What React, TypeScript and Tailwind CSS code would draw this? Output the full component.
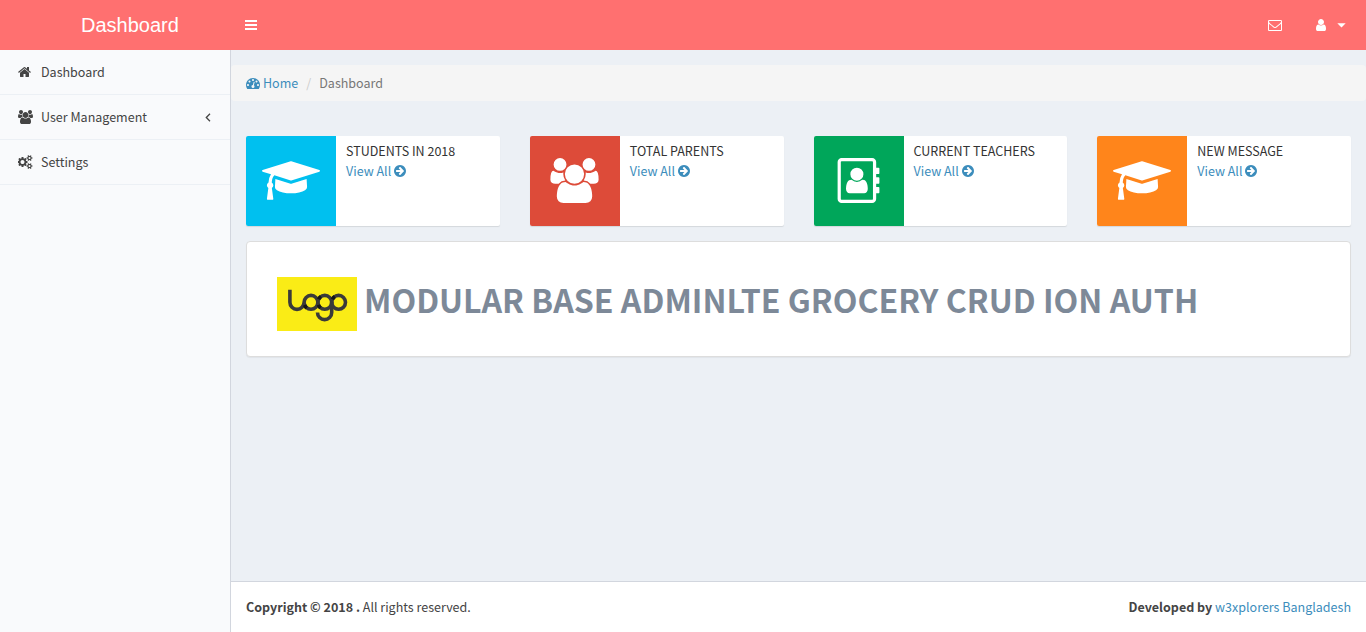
import type { ReactNode } from "react";

const ICONS = {
  home: {
    box: "64 0 1664 1792",
    d: "M1472 992v480q0 26-19 45t-45 19h-384v-384h-256v384h-384q-26 0-45-19t-19-45v-480q0-1 .5-3t.5-3l575-474 575 474q1 2 1 6zm223-69l-62 74q-8 9-21 11h-3q-13 0-21-7l-692-577-692 577q-12 8-24 7-13-2-21-11l-62-74q-8-10-7-23.5t11-21.5l719-599q32-26 76-26t76 26l244 204v-195q0-14 9-23t23-9h192q14 0 23 9t9 23v408l219 182q10 8 11 21.5t-7 23.5z",
  },
  users: {
    box: "64 0 1920 1792",
    d: "M657 896q-162 5-265 128h-134q-82 0-138-40.5t-56-118.5q0-353 124-353 6 0 43.5 21t97.5 42.5 119 21.5q67 0 133-23-5 37-5 66 0 139 81 256zm1071 637q0 120-73 189.5t-194 69.5h-874q-121 0-194-69.5t-73-189.5q0-53 3.5-103.5t14-109 26.5-108.5 43-97.5 62-81 85.5-53.5 111.5-20q10 0 43 21.5t73 48 107 48 135 21.5 135-21.5 107-48 73-48 43-21.5q61 0 111.5 20t85.5 53.5 62 81 43 97.5 26.5 108.5 14 109 3.5 103.5zm-1024-1277q0 106-75 181t-181 75-181-75-75-181 75-181 181-75 181 75 75 181zm704 384q0 159-112.5 271.5t-271.5 112.5-271.5-112.5-112.5-271.5 112.5-271.5 271.5-112.5 271.5 112.5 112.5 271.5zm576 225q0 78-56 118.5t-138 40.5h-134q-103-123-265-128 81-117 81-256 0-29-5-66 66 23 133 23 59 0 119-21.5t97.5-42.5 43.5-21q124 0 124 353zm-128-609q0 106-75 181t-181 75-181-75-75-181 75-181 181-75 181 75 75 181z",
  },
  cogs: {
    box: "0 0 1920 1792",
    d: "M832 896q0-106-75-181t-181-75-181 75-75 181 75 181 181 75 181-75 75-181zm768 512q0-52-38-90t-90-38-90 38-38 90q0 53 37.5 90.5t90.5 37.5 90.5-37.5 37.5-90.5zm0-1024q0-52-38-90t-90-38-90 38-38 90q0 53 37.5 90.5t90.5 37.5 90.5-37.5 37.5-90.5zm-384 421v185q0 10-7 19.5t-16 10.5l-155 24q-11 35-32 76 34 48 90 115 7 11 7 20 0 12-7 19-23 30-82.5 89.5t-78.5 59.5q-11 0-21-7l-115-90q-37 19-77 31-11 108-23 155-7 24-30 24h-186q-11 0-20-7.5t-10-17.5l-23-153q-34-10-75-31l-118 89q-7 7-20 7-11 0-21-8-144-133-144-160 0-9 7-19 10-14 41-53t47-61q-23-44-35-82l-152-24q-10-1-17-9.5t-7-19.5v-185q0-10 7-19.5t16-10.5l155-24q11-35 32-76-34-48-90-115-7-11-7-20 0-12 7-20 22-30 82-89t79-59q11 0 21 7l115 90q34-18 77-32 11-108 23-154 7-24 30-24h186q11 0 20 7.5t10 17.5l23 153q34 10 75 31l118-89q8-7 20-7 11 0 21 8 144 133 144 160 0 8-7 19-12 16-42 54t-45 60q23 48 34 82l152 23q10 2 17 10.5t7 19.5zm640 533v140q0 16-149 31-12 27-30 52 51 113 51 138 0 4-4 7-122 71-124 71-8 0-46-47t-52-68q-20 2-30 2t-30-2q-14 21-52 68t-46 47q-2 0-124-71-4-3-4-7 0-25 51-138-18-25-30-52-149-15-149-31v-140q0-16 149-31 13-29 30-52-51-113-51-138 0-4 4-7 4-2 35-20t59-34 30-16q8 0 46 46.5t52 67.5q20-2 30-2t30 2q51-71 92-112l6-2q4 0 124 70 4 3 4 7 0 25-51 138 17 23 30 52 149 15 149 31zm0-1024v140q0 16-149 31-12 27-30 52 51 113 51 138 0 4-4 7-122 71-124 71-8 0-46-47t-52-68q-20 2-30 2t-30-2q-14 21-52 68t-46 47q-2 0-124-71-4-3-4-7 0-25 51-138-18-25-30-52-149-15-149-31v-140q0-16 149-31 13-29 30-52-51-113-51-138 0-4 4-7 4-2 35-20t59-34 30-16q8 0 46 46.5t52 67.5q20-2 30-2t30 2q51-71 92-112l6-2q4 0 124 70 4 3 4 7 0 25-51 138 17 23 30 52 149 15 149 31z",
  },
  envelope: {
    box: "0 0 1792 1792",
    d: "M1664 1504v-768q-32 36-69 66-268 206-426 338-51 43-83 67t-86.5 48.5-102.5 24.5h-2q-48 0-102.5-24.5t-86.5-48.5-83-67q-158-132-426-338-37-30-69-66v768q0 13 9.5 22.5t22.5 9.5h1472q13 0 22.5-9.5t9.5-22.5zm0-1051v-24.5l-.5-13-3-12.5-5.5-9-9-7.5-14-2.5h-1472q-13 0-22.5 9.5t-9.5 22.5q0 168 147 284 193 152 401 317 6 5 35 29.5t46 37.5 44.5 31.5 50.5 27.5 43 9h2q20 0 43-9t50.5-27.5 44.5-31.5 46-37.5 35-29.5q208-165 401-317 54-43 100.5-115.5t46.5-131.5zm128-37v1088q0 66-47 113t-113 47h-1472q-66 0-113-47t-47-113v-1088q0-66 47-113t113-47h1472q66 0 113 47t47 113z",
  },
  user: {
    box: "256 0 1280 1792",
    d: "M1536 1399q0 109-62.5 187t-150.5 78h-854q-88 0-150.5-78t-62.5-187q0-85 8.5-160.5t31.5-152 58.5-131 94-89 134.5-34.5q131 128 313 128t313-128q76 0 134.5 34.5t94 89 58.5 131 31.5 152 8.5 160.5zm-256-887q0 159-112.5 271.5t-271.5 112.5-271.5-112.5-112.5-271.5 112.5-271.5 271.5-112.5 271.5 112.5 112.5 271.5z",
  },
  gauge: {
    box: "0 0 1792 1792",
    d: "M384 1152q0-53-37.5-90.5t-90.5-37.5-90.5 37.5-37.5 90.5 37.5 90.5 90.5 37.5 90.5-37.5 37.5-90.5zm192-448q0-53-37.5-90.5t-90.5-37.5-90.5 37.5-37.5 90.5 37.5 90.5 90.5 37.5 90.5-37.5 37.5-90.5zm428 481l101-382q6-26-7.5-48.5t-38.5-29.5-48 6.5-30 39.5l-101 382q-60 5-107 43.5t-63 98.5q-20 77 20 146t117 89 146-20 89-117q16-60-6-117t-72-91zm660-33q0-53-37.5-90.5t-90.5-37.5-90.5 37.5-37.5 90.5 37.5 90.5 90.5 37.5 90.5-37.5 37.5-90.5zm-640-640q0-53-37.5-90.5t-90.5-37.5-90.5 37.5-37.5 90.5 37.5 90.5 90.5 37.5 90.5-37.5 37.5-90.5zm448 192q0-53-37.5-90.5t-90.5-37.5-90.5 37.5-37.5 90.5 37.5 90.5 90.5 37.5 90.5-37.5 37.5-90.5zm320 448q0 261-141 483-19 29-54 29h-1402q-35 0-54-29-141-221-141-483 0-182 71-348t191-286 286-191 348-71 348 71 286 191 191 286 71 348z",
  },
  cap: {
    box: "0 0 2304 1792",
    d: "M1774 836l18 316q4 69-82 128t-235 93.5-323 34.5-323-34.5-235-93.5-82-128l18-316 574 181q22 7 48 7t48-7zm530-324q0 23-22 31l-1120 352q-4 1-10 1t-10-1l-652-206q-43 34-71 111.5t-34 178.5q63 36 63 109 0 69-58 107l58 433q2 14-8 25-9 11-24 11h-192q-15 0-24-11-10-11-8-25l58-433q-58-38-58-107 0-73 65-111 11-207 98-330l-333-104q-22-8-22-31t22-31l1120-352q4-1 10-1t10 1l1120 352q22 8 22 31z",
  },
  addressBook: {
    box: "64 0 1664 1792",
    d: "M1092 644q0 107-76.5 183t-183.5 76-183.5-76-76.5-183q0-108 76.5-184t183.5-76 183.5 76 76.5 184zm-48 220q46 0 82.5 17t60 47.5 39.5 67 24 81 11.5 82.5 3.5 79q0 67-39.5 118.5t-105.5 51.5h-576q-66 0-105.5-51.5t-39.5-118.5q0-48 4.5-93.5t18.5-98.5 36.5-91.5 63-64.5 93.5-26h5q7 4 32 19.5t35.5 21 33 17 37 16 35 9 39.5 4.5 39.5-4.5 35-9 37-16 33-17 35.5-21 32-19.5zm684-256q0 13-9.5 22.5t-22.5 9.5h-96v128h96q13 0 22.5 9.5t9.5 22.5v192q0 13-9.5 22.5t-22.5 9.5h-96v128h96q13 0 22.5 9.5t9.5 22.5v192q0 13-9.5 22.5t-22.5 9.5h-96v224q0 66-47 113t-113 47h-1216q-66 0-113-47t-47-113v-1472q0-66 47-113t113-47h1216q66 0 113 47t47 113v224h96q13 0 22.5 9.5t9.5 22.5v192zm-256 1024v-1472q0-13-9.5-22.5t-22.5-9.5h-1216q-13 0-22.5 9.5t-9.5 22.5v1472q0 13 9.5 22.5t22.5 9.5h1216q13 0 22.5-9.5t9.5-22.5z",
  },
  arrowCircle: {
    box: "128 0 1536 1792",
    d: "M1413 896q0-27-18-45l-91-91-362-362q-18-18-45-18t-45 18l-91 91q-18 18-18 45t18 45l189 189h-502q-26 0-45 19t-19 45v128q0 26 19 45t45 19h502l-189 189q-19 19-19 45t19 45l91 91q18 18 45 18t45-18l362-362 91-91q18-18 18-45zm251 0q0 209-103 385.5t-279.5 279.5-385.5 103-385.5-103-279.5-279.5-103-385.5 103-385.5 279.5-279.5 385.5-103 385.5 103 279.5 279.5 103 385.5z",
  },
};

type IconName = keyof typeof ICONS;

function Icon({ name, className }: { name: IconName; className: string }) {
  return (
    <svg viewBox={ICONS[name].box} className={`shrink-0 ${className}`} fill="currentColor">
      <path d={ICONS[name].d} />
    </svg>
  );
}

function MenuItem({ icon, iconClass, label, children }: { icon: IconName; iconClass: string; label: string; children?: ReactNode }) {
  return (
    <a className="flex h-[45px] items-center border-b border-[#ecf0f5] pl-[18px] pr-[19px] text-[#444]">
      <span className="flex w-[23px] shrink-0">
        <Icon name={icon} className={iconClass} />
      </span>
      <span className="flex-1 whitespace-nowrap">{label}</span>
      {children}
    </a>
  );
}

const CARDS: { label: string; icon: IconName; iconClass: string; color: string }[] = [
  { label: "STUDENTS IN 2018", icon: "cap", iconClass: "h-[45px] w-[58px]", color: "bg-[#00c0ef]" },
  { label: "TOTAL PARENTS", icon: "users", iconClass: "h-[45px] w-[49px]", color: "bg-[#dd4b39]" },
  { label: "CURRENT TEACHERS", icon: "addressBook", iconClass: "h-[45px] w-[43px]", color: "bg-[#00a65a]" },
  { label: "NEW MESSAGE", icon: "cap", iconClass: "h-[45px] w-[58px]", color: "bg-[#ff851b]" },
];

function Logo() {
  return (
    <svg viewBox="0 0 80 54" className="h-[54px] w-20 shrink-0" fill="none" strokeWidth="3.6">
      <rect width="80" height="54" fill="#faec16" />
      <g stroke="#3a3a3a">
        <path d="M12.9 12.8V25.3a7.1 7.1 0 0 0 14.2 0a6.9 6.9 0 1 1 13.8 0a6.9 6.9 0 1 1-13.8 0" />
        <circle cx="47.8" cy="25.3" r="6.9" />
        <circle cx="61.6" cy="25.3" r="6.9" />
        <path d="M54.7 25V35.5a7.1 7.1 0 0 1-14.2 0" />
      </g>
      <g stroke="#161616">
        <path d="M27.6 28a6.9 6.9 0 0 0 2.2 3" />
        <path d="M41.6 22.3a6.9 6.9 0 0 1 2.3-2.7" />
        <path d="M41.4 27.8a6.9 6.9 0 0 0 2.2 3" />
        <path d="M55.4 22.3a6.9 6.9 0 0 1 2.3-2.7" />
      </g>
    </svg>
  );
}

export default function App() {
  return (
    <div className="flex h-[632px] flex-col bg-[#ecf0f5] font-['Noto_Sans_CJK_SC',sans-serif] text-[12.53px] leading-5 text-[#333]">
      <header className="flex h-[50px] shrink-0 items-center bg-[#ff7070] text-white">
        <div className="w-[230px] pl-[81px] font-['Liberation_Sans',sans-serif] text-xl">Dashboard</div>
        <svg viewBox="0 0 12 10" className="ml-[15px] h-[10px] w-3" fill="currentColor">
          <path d="M0 0h12v2H0zM0 4h12v2H0zM0 8h12v2H0z" />
        </svg>
        <div className="ml-auto flex items-center pr-5">
          <Icon name="envelope" className="mr-[34px] size-[14px]" />
          <Icon name="user" className="mr-[11px] h-[14px] w-[10px]" />
          <svg viewBox="0 0 9 5" className="h-[5px] w-[9px]" fill="currentColor">
            <path d="M.3 .2h8.4L4.5 4.6z" />
          </svg>
        </div>
      </header>

      <div className="flex min-h-0 flex-1">
        <aside className="w-[231px] shrink-0 border-r border-[#d2d6de] bg-[#f9fafc]">
          <MenuItem icon="home" iconClass="h-[14px] w-[13px]" label="Dashboard" />
          <MenuItem icon="users" iconClass="h-[14px] w-[15px]" label="User Management">
            <svg viewBox="0 0 6 9" className="h-[9px] w-[6px]" fill="none" stroke="currentColor" strokeWidth="1.3">
              <path d="M5 .8L1.3 4.5L5 8.2" />
            </svg>
          </MenuItem>
          <MenuItem icon="cogs" iconClass="h-[14px] w-[15px]" label="Settings" />
        </aside>

        <div className="flex min-w-0 flex-1 flex-col">
          <main className="flex-1 pt-[15px]">
            <nav className="flex h-9 items-center rounded bg-[#f5f5f5] px-[15px]">
              <a className="flex items-center gap-[3px] text-[#3c8dbc]">
                <Icon name="gauge" className="size-[14px]" />
                Home
              </a>
              <span className="w-[21px] text-center text-[#ccc]">/</span>
              <span className="text-[#777]">Dashboard</span>
            </nav>

            <div className="mt-[35px] grid grid-cols-4 gap-[30px] px-[15px]">
              {CARDS.map((card) => (
                <section key={card.label} className="flex h-[90px] overflow-hidden rounded-xs bg-white shadow-[0_1px_1px_rgba(0,0,0,0.1)]">
                  <div className={`flex w-[90px] shrink-0 items-start justify-center pt-[22px] text-white ${card.color}`}>
                    <Icon name={card.icon} className={card.iconClass} />
                  </div>
                  <div className="px-[10px] py-[5px]">
                    <div className="whitespace-nowrap">{card.label}</div>
                    <a className="flex items-center gap-[3px] text-[#3c8dbc]">
                      View All
                      <Icon name="arrowCircle" className="h-[14px] w-3" />
                    </a>
                  </div>
                </section>
              ))}
            </div>

            <section className="mx-[15px] mt-[15px] flex h-[116px] items-start rounded border border-[#ddd] bg-white pl-[30px] pt-[35px] shadow-[0_1px_1px_rgba(0,0,0,0.05)]">
              <Logo />
              <h1 className="ml-[7px] whitespace-nowrap text-[32.13px] font-bold leading-[44px] text-[#7d8998]">
                MODULAR BASE ADMINLTE GROCERY CRUD ION AUTH
              </h1>
            </section>
          </main>

          <footer className="flex h-[51px] shrink-0 items-center justify-between border-t border-[#d2d6de] bg-white px-[15px] text-[#444]">
            <div>
              <b>Copyright © 2018 .</b> All rights reserved.
            </div>
            <div>
              <b>Developed by</b> <a className="text-[#3c8dbc]">w3xplorers Bangladesh</a>
            </div>
          </footer>
        </div>
      </div>
    </div>
  );
}
